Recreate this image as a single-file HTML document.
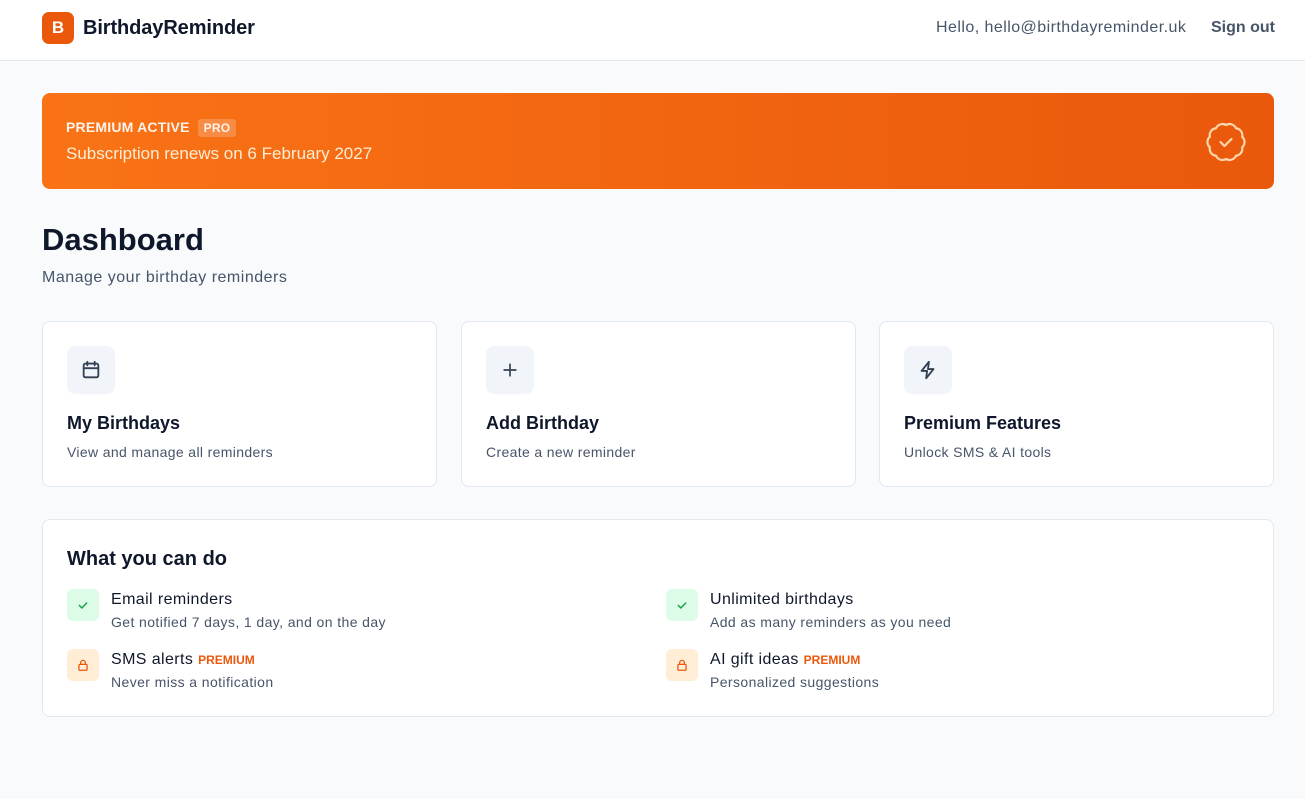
<!DOCTYPE html>
<html><head><meta charset="utf-8"><style>
*{box-sizing:border-box;margin:0;padding:0}
body{width:1305px;height:799px;background:#f8fafc;font-family:"Liberation Sans",sans-serif;color:#0f172a;overflow:hidden;position:relative}
.hdr{position:absolute;left:0;top:0;width:1305px;height:61px;background:#fff;border-bottom:1px solid #e2e8f0}
.logo{position:absolute;left:42px;top:12px;width:32px;height:32px;border-radius:7px;background:#ea580c;color:#fff;font-weight:bold;font-size:17px;text-align:center;line-height:32px}
.brand{position:absolute;left:83px;top:17px;font-size:20px;font-weight:bold;color:#0f172a;letter-spacing:-0.1px}
.hello{position:absolute;left:936px;top:19px;font-size:16px;color:#475569;letter-spacing:0.45px}
.so{position:absolute;left:1211px;top:19px;font-size:16px;color:#475569;font-weight:bold}
.ban{position:absolute;left:42px;top:93px;width:1232px;height:96px;border-radius:8px;background:linear-gradient(90deg,#f97316,#ea580c)}
.ban .t{position:absolute;left:24px;top:26px;color:#fff;font-weight:bold;font-size:14px;opacity:.92;letter-spacing:0.2px}
.pro{display:inline-block;margin-left:8px;background:rgba(255,255,255,.22);border-radius:3px;padding:2px 6px;font-size:12px}
.ban .s{position:absolute;left:24px;top:51px;color:#ffedd5;font-size:17px}
h1{position:absolute;left:42px;top:222px;font-size:31px;font-weight:bold}
.sub{position:absolute;left:42px;top:269px;font-size:16px;color:#475569;letter-spacing:0.5px}
.card{position:absolute;top:321px;width:395px;height:166px;background:#fff;border:1px solid #e2e8f0;border-radius:8px}
.ic{position:absolute;left:24px;top:24px;width:48px;height:48px;border-radius:8px;background:#f1f5f9;display:flex;align-items:center;justify-content:center}
.card .h{position:absolute;left:24px;top:91px;font-size:18px;font-weight:bold}
.card .d{position:absolute;left:24px;top:122px;font-size:14px;color:#475569;letter-spacing:0.35px}
.box{position:absolute;left:42px;top:519px;width:1232px;height:198px;background:#fff;border:1px solid #e2e8f0;border-radius:8px}
.box h2{position:absolute;left:24px;top:28px;font-size:20px;font-weight:bold}
.it{position:absolute;width:500px;height:40px}
.it .b{position:absolute;left:0;top:0;width:32px;height:32px;border-radius:6px;display:flex;align-items:center;justify-content:center}
.it .n{position:absolute;left:44px;top:2px;font-size:16px;color:#0f172a;letter-spacing:0.4px}
.it .n i{font-style:normal;font-weight:bold;font-size:12px;color:#ea580c;letter-spacing:0}
.it .e{position:absolute;left:44px;top:25px;font-size:14px;color:#475569;letter-spacing:0.4px}
.g{background:#dcfce7}.o{background:#ffedd5}
</style></head><body>
<div class="hdr"><div class="logo">B</div><div class="brand">BirthdayReminder</div>
<div class="hello">Hello, hello@birthdayreminder.uk</div><div class="so">Sign out</div></div>
<div class="ban"><div class="t">PREMIUM ACTIVE<span class="pro">PRO</span></div><div class="s">Subscription renews on 6 February 2027</div>
<svg style="position:absolute;left:1164px;top:29px" width="40" height="40" viewBox="0 0 40 40" fill="none" stroke="#fed7aa" stroke-width="2.2" stroke-linecap="round" stroke-linejoin="round"><path d="M20 3A7 7 0 0 1 30 6.25A7 7 0 0 1 36.17 14.75A7 7 0 0 1 36.17 25.25A7 7 0 0 1 30 33.75A7 7 0 0 1 20 37A7 7 0 0 1 10 33.75A7 7 0 0 1 3.83 25.25A7 7 0 0 1 3.83 14.75A7 7 0 0 1 10 6.25A7 7 0 0 1 20 3Z"/><path d="M14.5 20l4 4 7-7"/></svg></div>
<h1>Dashboard</h1><div class="sub">Manage your birthday reminders</div>
<div class="card" style="left:42px"><div class="ic"><svg width="22" height="22" viewBox="0 0 24 24" fill="none" stroke="#334155" stroke-width="2" stroke-linecap="round"><rect x="4" y="5" width="16" height="15" rx="2"/><path d="M8 3v4M16 3v4M4 10h16"/></svg></div><div class="h">My Birthdays</div><div class="d">View and manage all reminders</div></div>
<div class="card" style="left:461px"><div class="ic"><svg width="20" height="20" viewBox="0 0 24 24" fill="none" stroke="#334155" stroke-width="2" stroke-linecap="round"><path d="M12 5v14M5 12h14"/></svg></div><div class="h">Add Birthday</div><div class="d">Create a new reminder</div></div>
<div class="card" style="left:879px"><div class="ic"><svg width="22" height="22" viewBox="0 0 24 24" fill="none" stroke="#334155" stroke-width="2" stroke-linejoin="round"><path d="M13 3L5 13h6l-1 8 8-10h-6z"/></svg></div><div class="h">Premium Features</div><div class="d">Unlock SMS &amp; AI tools</div></div>
<div class="box"><h2>What you can do</h2>
<div class="it" style="left:24px;top:69px"><div class="b g"><svg width="14" height="14" viewBox="0 0 24 24" fill="none" stroke="#16a34a" stroke-width="2.5"><path d="M5 12l5 5 9-9"/></svg></div><div class="n">Email reminders</div><div class="e">Get notified 7 days, 1 day, and on the day</div></div>
<div class="it" style="left:623px;top:69px"><div class="b g"><svg width="14" height="14" viewBox="0 0 24 24" fill="none" stroke="#16a34a" stroke-width="2.5"><path d="M5 12l5 5 9-9"/></svg></div><div class="n">Unlimited birthdays</div><div class="e">Add as many reminders as you need</div></div>
<div class="it" style="left:24px;top:129px"><div class="b o"><svg width="14" height="14" viewBox="0 0 24 24" fill="none" stroke="#ea580c" stroke-width="2.2"><rect x="5" y="11" width="14" height="10" rx="2"/><path d="M8 11V8a4 4 0 018 0v3"/></svg></div><div class="n">SMS alerts <i>PREMIUM</i></div><div class="e">Never miss a notification</div></div>
<div class="it" style="left:623px;top:129px"><div class="b o"><svg width="14" height="14" viewBox="0 0 24 24" fill="none" stroke="#ea580c" stroke-width="2.2"><rect x="5" y="11" width="14" height="10" rx="2"/><path d="M8 11V8a4 4 0 018 0v3"/></svg></div><div class="n">AI gift ideas <i>PREMIUM</i></div><div class="e">Personalized suggestions</div></div>
</div>
</body></html>
